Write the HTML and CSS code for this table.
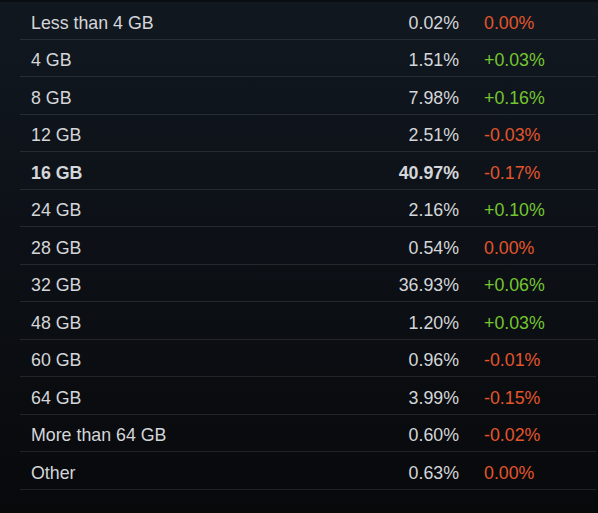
FILE: index.html
```html
<!DOCTYPE html>
<html>
<head>
<meta charset="utf-8">
<link rel="stylesheet" href="styles.css">
</head>
<body>
<div class="table">
  <div class="row"><span class="label">Less than 4 GB</span><span class="value">0.02%</span><span class="change down">0.00%</span></div>
  <div class="row"><span class="label">4 GB</span><span class="value">1.51%</span><span class="change up">+0.03%</span></div>
  <div class="row"><span class="label">8 GB</span><span class="value">7.98%</span><span class="change up">+0.16%</span></div>
  <div class="row"><span class="label">12 GB</span><span class="value">2.51%</span><span class="change down">-0.03%</span></div>
  <div class="row bold"><span class="label">16 GB</span><span class="value">40.97%</span><span class="change down">-0.17%</span></div>
  <div class="row"><span class="label">24 GB</span><span class="value">2.16%</span><span class="change up">+0.10%</span></div>
  <div class="row"><span class="label">28 GB</span><span class="value">0.54%</span><span class="change down">0.00%</span></div>
  <div class="row"><span class="label">32 GB</span><span class="value">36.93%</span><span class="change up">+0.06%</span></div>
  <div class="row"><span class="label">48 GB</span><span class="value">1.20%</span><span class="change up">+0.03%</span></div>
  <div class="row"><span class="label">60 GB</span><span class="value">0.96%</span><span class="change down">-0.01%</span></div>
  <div class="row"><span class="label">64 GB</span><span class="value">3.99%</span><span class="change down">-0.15%</span></div>
  <div class="row"><span class="label">More than 64 GB</span><span class="value">0.60%</span><span class="change down">-0.02%</span></div>
  <div class="row"><span class="label">Other</span><span class="value">0.63%</span><span class="change down">0.00%</span></div>
</div>
</body>
</html>
```
FILE: styles.css
```css
html, body {
  margin: 0;
  padding: 0;
  height: 100%;
}
body {
  background: linear-gradient(180deg, #111820 0%, #0d1117 45%, #08090b 100%);
  border-top: 2px solid #0a0d11;
  box-sizing: border-box;
  font-family: "Liberation Sans", Arial, sans-serif;
  font-size: 17.8px;
  color: #d4d6d9;
  overflow: hidden;
}
.table {
  margin: 0 2px 0 20px;
  display: flex;
  flex-direction: column;
}
.row {
  display: flex;
  height: 37.5px;
  box-sizing: border-box;
  padding-top: 9.5px;
  line-height: 22px;
  border-bottom: 1px solid rgba(255, 255, 255, 0.1);
}
.label {
  flex: 1;
  padding-left: 11px;
}
.value {
  width: 120px;
  text-align: right;
}
.change {
  width: 137px;
  padding-left: 25px;
  box-sizing: border-box;
}
.bold .label,
.bold .value {
  font-weight: bold;
}
.up {
  color: #74c530;
}
.down {
  color: #e2552c;
}
```
